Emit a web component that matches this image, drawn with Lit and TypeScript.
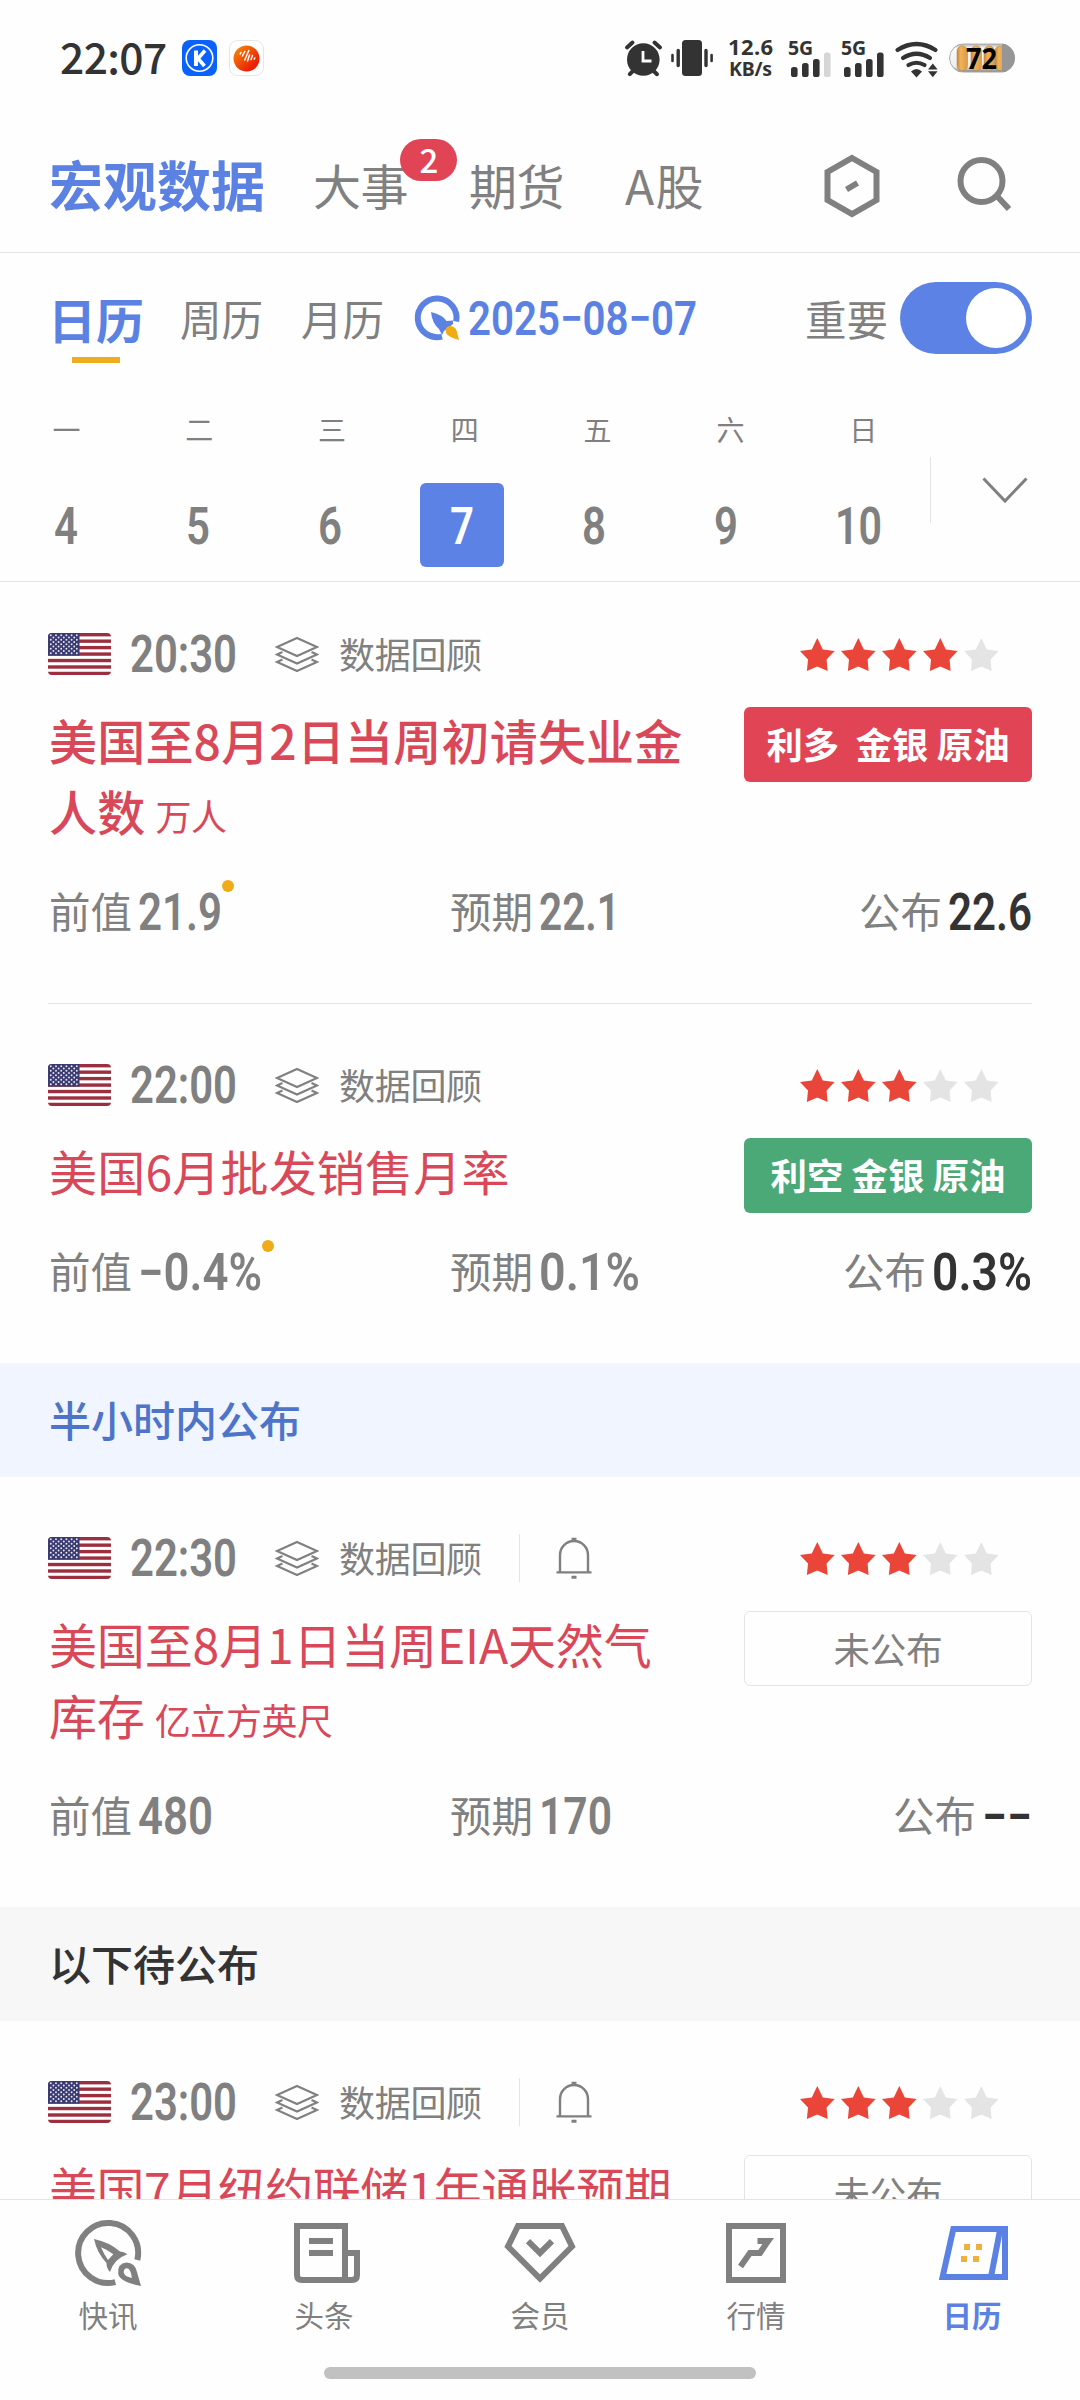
import { LitElement, html, css, svg, nothing } from "lit";
import { customElement, property } from "lit/decorators.js";

const FONT = css`"Noto Sans CJK SC", "Noto Sans", sans-serif`;

/** Narrow tabular figures: Roboto squeezed to a given ink width. */
@customElement("fig-text")
class FigText extends LitElement {
  @property() text = "";
  @property({ type: Number }) w = 100;
  @property({ type: Number }) size = 51;
  @property({ type: Number }) weight = 600;
  static styles = css`
    :host { display: inline-block; flex: none; }
    svg { display: block; overflow: visible; }
    text { font-family: Roboto, "Liberation Sans", sans-serif; fill: currentColor; }
  `;
  render() {
    const cap = Math.round(this.size * 0.711);
    return html`<svg width=${this.w} height=${cap}>
      <text x="-2" y=${cap} font-size=${this.size} font-weight=${this.weight}
        textLength=${this.w + 4} lengthAdjust="spacingAndGlyphs">${this.text}</text>
    </svg>`;
  }
}

const STAR = "17.3,0 22.8,11.6 34.6,13 26.6,21.4 27.6,33 17.3,28.6 6.9,33 8,21.4 0,13 11.8,11.6";

const flag = () => html`<svg class="flag" width="63" height="42" viewBox="0 0 63 42">
  <rect width="63" height="42" fill="#fff"/>
  ${[0, 1, 2, 3, 4, 5, 6].map((i) => svg`<rect y=${i * 6.46} width="63" height="3.4" fill="#9c2f3f"/>`)}
  <rect width="31.5" height="22.6" fill="#3b3b72"/>
  ${[0, 1, 2, 3, 4, 5, 6, 7, 8].map((r) =>
    Array.from({ length: r % 2 ? 5 : 6 }, (_, c) =>
      svg`<circle cx=${2.8 + c * 5.2 + (r % 2 ? 2.6 : 0)} cy=${2.3 + r * 2.25} r=".95" fill="#e6e6f2"/>`))}
</svg>`;

const layers = () => html`<svg width="44" height="36" viewBox="0 0 44 36" fill="none" stroke="#808080" stroke-width="2.2">
  <path d="M22 2 42 11 22 20 2 11Z"/>
  <path d="M7.5 16 2 18.5 22 27.5 42 18.5 36.5 16"/>
  <path d="M7.5 23.5 2 26 22 35 42 26 36.5 23.5"/>
</svg>`;

const bell = () => html`<svg width="36" height="42" viewBox="0 0 36 42" fill="none" stroke="#808080" stroke-width="2.4">
  <path d="M4 35V18a14 14 0 0 1 28 0V35M.5 35.4h35"/>
  <path d="M15.5 2.2h5M15.5 40.2h5" stroke-width="3"/>
</svg>`;

type Figure = [text: string, width: number];

interface Entry {
  time: string; stars: number; title: string; unit?: string; style?: string; bell?: boolean;
  tag: string; kind: string; revised?: boolean;
  values?: { prev: Figure; est: Figure; act: Figure };
}

@customElement("data-card")
class DataCard extends LitElement {
  @property({ attribute: false }) entry!: Entry;
  static styles = css`
    :host { display: block; padding: 60px 48px 0; color: #808080; }
    :host([first]) { padding-top: 51px; }
    .head { display: flex; align-items: center; height: 42px; }
    .flag { border-radius: 4px; display: block; }
    .head fig-text { margin-left: 21px; }
    .layers { display: flex; margin-left: 40px; }
    .review { font-size: 36px; line-height: 42px; margin: -3px 0 0 20px; letter-spacing: -.3px; }
    .rule { width: 1px; height: 48px; background: #e4e4e4; margin-left: 37px; }
    .bell { display: flex; margin-left: 36px; }
    .stars { display: flex; margin-left: auto; margin-right: 33px; }
    .body { display: flex; justify-content: space-between; align-items: flex-start; margin-top: 32px; }
    .title { width: 645px; margin: -3px 0 3px 1px; font-size: 48px; letter-spacing: .2px; line-height: 71px; color: #d94858; white-space: pre-line; }
    .strong { font-weight: 500; }
    .tight { letter-spacing: -.15px; }
    .tighter { letter-spacing: -.5px; }
    .unit { font-size: 36px; line-height: 36px; font-weight: 400; margin-left: 10px; letter-spacing: -.4px; }
    .tag { box-sizing: border-box; width: 288px; height: 75px; border-radius: 6px; font-size: 36.4px; line-height: 73px;
      margin-bottom: -4px; text-align: center; color: #fff; font-weight: 700; white-space: pre; }
    .up { background: #e04455; }
    .down { background: #4ba977; }
    .wait { border: 1px solid #e4e4e4; color: #808080; font-weight: 400; line-height: 72px; }
    .values { display: grid; grid-template-columns: 401px 1fr auto; height: 60px; align-items: center; margin-top: 33px;
      font-size: 41.5px; line-height: 60px; padding-bottom: 61px; }
    .value { display: flex; align-items: center; }
    .label { margin: -5px 0 0 1px; }
    .value fig-text { margin-left: 8px; }
    .act fig-text { color: #333; margin-right: 2px; }
    .dot { width: 12px; height: 12px; border-radius: 50%; background: #f0ac16; align-self: flex-start; margin: -5px 0 0 2px; }
  `;
  private value(label: string, fig: Figure, cls = "", dot = false) {
    return html`<div class="value ${cls}"><span class="label">${label}</span><fig-text .text=${fig[0]} .w=${fig[1]}></fig-text>${dot ? html`<span class="dot"></span>` : nothing}</div>`;
  }
  render() {
    const e = this.entry;
    return html`
      <div class="head">
        ${flag()}
        <fig-text .text=${e.time} .w=${103} .weight=${600}></fig-text>
        <span class="layers">${layers()}</span>
        <span class="review">数据回顾</span>
        ${e.bell ? html`<span class="rule"></span><span class="bell">${bell()}</span>` : nothing}
        <svg class="stars" width="199" height="33">
          ${[0, 1, 2, 3, 4].map((i) => svg`<polygon points=${STAR} transform="translate(${i * 41} 0)" fill=${i < e.stars ? "#e94538" : "#e4e4e4"}/>`)}
        </svg>
      </div>
      <div class="body">
        <div class="title ${e.style ?? ""}">${e.title}${e.unit ? html`<span class="unit">${e.unit}</span>` : nothing}</div>
        <div class="tag ${e.kind}">${e.tag}</div>
      </div>
      ${e.values ? html`<div class="values">
        ${this.value("前值", e.values.prev, "", e.revised)}
        ${this.value("预期", e.values.est)}
        ${this.value("公布", e.values.act, "act")}
      </div>` : nothing}`;
  }
}

const ENTRIES: Entry[] = [
  { time: "20:30", stars: 4, title: "美国至8月2日当周初请失业金\n人数", unit: "万人", style: "strong", tag: "利多  金银 原油", kind: "up", revised: true,
    values: { prev: ["21.9", 80], est: ["22.1", 77], act: ["22.6", 80] } },
  { time: "22:00", stars: 3, title: "美国6月批发销售月率", tag: "利空 金银 原油", kind: "down", revised: true,
    values: { prev: ["−0.4%", 120], est: ["0.1%", 97], act: ["0.3%", 96] } },
  { time: "22:30", stars: 3, title: "美国至8月1日当周EIA天然气\n库存", unit: "亿立方英尺", style: "tight", bell: true, tag: "未公布", kind: "wait",
    values: { prev: ["480", 71], est: ["170", 69], act: ["−−", 46] } },
  { time: "23:00", stars: 3, title: "美国7月纽约联储1年通胀预期", style: "tighter", bell: true, tag: "未公布", kind: "wait" },
];

const G = "#333";

const statusIcons = () => html`
<svg width="392" height="42" viewBox="624 37 392 42">
  <g fill=${G} stroke=${G}>
    <circle cx="643.3" cy="59.5" r="16.3" stroke="none"/>
    <path d="M627 47.5 632.5 42.5M660 47.5 654.5 42.5" stroke-width="4" stroke-linecap="round"/>
    <path d="M634 70 629.8 74.2M652.5 70 657 74.2" stroke-width="4" stroke-linecap="round"/>
    <path d="M643 51V61H651.5" fill="none" stroke="#fefefe" stroke-width="2.8"/>
    <rect x="682" y="40" width="20" height="36" rx="3.5" stroke="none"/>
    <path d="M678.2 50.5V65.5M706 50.5V65.5" stroke-width="3.4" stroke-linecap="round"/>
    <path d="M672.5 55V61M711.6 55V61" stroke-width="2.6" stroke-linecap="round"/>
  </g>
  <g fill=${G} class="st">
    <text x="728" y="55" font-size="22" textLength="45">12.6</text>
    <text x="729" y="75.5" font-size="19.5" textLength="43">KB/s</text>
    <text x="788" y="55" font-size="19.5" textLength="25">5G</text>
    <text x="841" y="55" font-size="19.5" textLength="25">5G</text>
  </g>
  ${[0, 53].map((dx) => [[791, 67], [802, 63], [813, 59], [824, 52.5]].map(([x, y], i) =>
    svg`<rect x=${x + dx} y=${y} width="6.6" height=${77 - y} rx="2.6" fill=${i === 3 && !dx ? "#d6d6d6" : G}/>`))}
  <g fill="none" stroke=${G} stroke-width="4.2" stroke-linecap="round">
    <path d="M897.5 50Q916.5 38 935.5 50"/>
    <path d="M903 58Q916.5 49.5 930 58"/>
    <path d="M908.5 65Q916.5 60.5 924.5 65"/>
  </g>
  <path d="M911 71.5Q916.5 66.5 922 71.5L916.5 77.5Z" fill=${G}/>
  <path d="M928 69.5 932.8 63.5 937.6 69.5ZM928 71.2H937.6L932.8 77.2Z" fill=${G}/>
  <defs>
    <clipPath id="bat"><rect x="949" y="43.5" width="66" height="29" rx="14.5"/></clipPath>
    <linearGradient id="cell"><stop offset="0" stop-color="#c98539"/><stop offset=".35" stop-color="#f0b25a"/><stop offset="1" stop-color="#dd9a45"/></linearGradient>
    <linearGradient id="tube" x2="0" y2="1"><stop offset="0" stop-color="#aaa"/><stop offset=".16" stop-color="#fafafa"/><stop offset=".8" stop-color="#eee"/><stop offset="1" stop-color="#777"/></linearGradient>
  </defs>
  <g clip-path="url(#bat)">
    <rect x="949" y="43.5" width="66" height="29" fill="url(#tube)"/>
    <rect x="949.5" y="44" width="65" height="28" rx="14" fill="none" stroke="#aaa"/>
    ${[957, 971, 984, 995].map((x) => svg`<rect x=${x} y="46" width="10.5" height="24.5" rx="5" fill="url(#cell)" stroke="#b98a52" stroke-width=".6"/>`)}
    <rect x="1002" y="43" width="14" height="30" fill="#969696"/>
  </g>
  <text x="966" y="68.5" font-size="29" textLength="31" lengthAdjust="spacingAndGlyphs" class="bt">72</text>
</svg>`;

const navIcons: Record<string, unknown> = {
  快讯: svg`<path d="M62.3 40A30 30 0 1 0 40.3 62.1" fill="none" stroke="#808080" stroke-width="6"/>
    <path fill="#808080" fill-rule="evenodd" d="M19 19Q34 22 45 31.5Q49 31.5 52.3 34.3Q39 39 35 52Q31.5 48.5 31.5 43Q22 33 19 19ZM26 27.3Q29 34.5 33 40L38.3 34.3Q33 30 26 27.3Z"/>
    <path fill="#808080" fill-rule="evenodd" d="M66 66Q45 62 43.2 54Q42 43.5 51.5 42.6Q60 43 62 52ZM56.8 58Q56 49 52 48.3Q48.5 48.5 48.7 52.5Q49.5 56.5 56.8 58Z"/>`,
  头条: svg`<g fill="none" stroke="#808080" stroke-width="6" transform="translate(3 3)">
    <path d="M3 3H51V57H8Q3 57 3 52Z"/><path d="M51 30H63V52Q63 57 58 57H50"/>
    <path d="M15 18H39M15 30H39"/></g>`,
  会员: svg`<g fill="none" stroke="#808080" stroke-width="6" transform="translate(-3 3)">
    <path d="M14 3H58L68 23.5 36 55.5 4 23.5Z"/><path d="M24 18.2 36 30 48 18.2"/></g>`,
  行情: svg`<g fill="none" stroke="#808080" stroke-width="6" transform="translate(3 3)">
    <path d="M3 3H57V57H3Z"/><path d="M14.5 43.5 24 30H34L42 18H31.5"/><path d="M38 15H48L40 25Z" fill="#808080" stroke="none"/></g>`,
  日历: svg`<g fill="none" stroke="#5b82e2" stroke-width="6" transform="translate(0 6)">
    <path d="M14.3 3H66V51H3.6Z"/><path d="M61.2 3 52 51"/></g>
    <path fill="#efb040" d="M25 24h6v6h-6zM37 24h6v6h-6zM22 36h6v6h-6zM34 36h6v6h-6z"/>`,
};

@customElement("app-root")
class AppRoot extends LitElement {
  static styles = css`
    :host { display: flex; flex-direction: column; width: 1080px; height: 2400px; overflow: hidden; background: #fefefe;
      color: #808080; font-family: ${FONT}; }
    * { box-sizing: border-box; }
    svg { display: block; flex: none; overflow: visible; }
    .status { display: flex; align-items: center; height: 116px; padding: 0 64px 0 60px; flex: none; }
    .clock { font-size: 42.5px; font-weight: 500; color: #333; line-height: 60px; width: 122px; margin-top: -5px; letter-spacing: -.6px; }
    .k { margin-right: 12px; }
    .sicons { margin-left: auto; }
    .st { font-family: "Noto Sans", sans-serif; font-weight: 700; }
    .bt { font-family: "Noto Sans", sans-serif; font-weight: 700; fill: #000; }
    .tabs { display: flex; align-items: center; height: 137px; border-bottom: 1px solid #e4e4e4; padding: 4px 68px 0 49px; flex: none; font-size: 48px; line-height: 70px; }
    .tabs b { font-size: 54px; font-weight: 700; color: #5b82e2; width: 264px; }
    .tabs b, .tabs span { margin-top: -4px; }
    .event { position: relative; width: 156px; letter-spacing: -.6px; }
    .tabs .count { position: absolute; left: 87px; top: -10px; margin: 0; width: 57px; height: 42px; border-radius: 21px; background: #e04455; color: #fff;
      font-size: 33px; font-weight: 500; line-height: 40px; text-align: center; }
    .futures { width: 156px; letter-spacing: -.6px; }
    .stocks { letter-spacing: 1.4px; }
    .hex { margin-left: auto; margin-right: 77px; }
    .filter { display: flex; align-items: center; height: 132px; padding: 0 48px 2px; flex: none; font-size: 41.5px; line-height: 60px; }
    .sel { font-size: 48px; font-weight: 700; color: #5b82e2; width: 132px; margin: 15px 0 0; display: flex; flex-direction: column; }
    .sel::after { content: ""; width: 48px; height: 6px; background: #edad1e; margin: 9px 0 0 24px; }
    .week { width: 121px; }
    .month { width: 114px; }
    .date { color: #5b82e2; margin: 0 0 0 10px; }
    .imp { margin-left: auto; }
    .toggle { width: 132px; height: 72px; border-radius: 36px; background: #5b82e4; padding: 6px; margin-left: 12px; display: flex; justify-content: flex-end; }
    .toggle i { width: 60px; height: 60px; border-radius: 50%; background: #fff; }
    .cal { display: flex; height: 197px; border-bottom: 1px solid #e4e4e4; align-items: flex-start; flex: none; }
    .wd { display: grid; grid-template-columns: repeat(7, 132.8px); font-size: 28px; line-height: 40px; padding-top: 24px; height: 98px; text-align: center; }
    .days { display: grid; grid-template-columns: repeat(7, 132px); }
    .day { display: flex; justify-content: center; }
    .cell { width: 84px; height: 84px; display: flex; align-items: center; justify-content: center; border-radius: 6px; padding-top: 2px; }
    .on { background: #5b82e4; color: #fff; }
    .more { display: flex; align-items: center; border-left: 1px solid #e4e4e4; height: 66px; margin-top: 72px; padding: 0 0 0 51px; }
    .list { flex: 1; min-height: 0; overflow: hidden; }
    .line { height: 1px; background: #e4e4e4; margin: 0 48px; }
    .band { height: 114px; line-height: 111px; padding-left: 49px; font-size: 42px; font-weight: 500; background: #f7f7f7; color: #333; }
    .soon { background: #f0f5ff; color: #4e74c8; }
    .nav { display: grid; grid-template-columns: repeat(5, 216px); height: 201px; border-top: 1px solid #e4e4e4; background: #fefefe; flex: none; align-content: start; padding-top: 20px; }
    .item { display: flex; flex-direction: column; align-items: center; font-size: 29.5px; line-height: 40px; gap: 8px; }
    .item.act { color: #5b82e2; font-weight: 700; }
    .home { grid-column: 1 / -1; width: 432px; height: 12px; border-radius: 6px; background: #c1c1c1; margin: 33px auto 0; }
  `;
  render() {
    return html`
      <div class="status">
        <span class="clock">22:07</span>
        <svg class="k" width="35" height="36" viewBox="0 0 35 36">
          <rect width="35" height="36" rx="8" fill="#0a62fb"/>
          <circle cx="17.5" cy="18" r="13.3" fill="none" stroke="#fff" stroke-width="1.6"/>
          <path d="M14 10.5V26" stroke="#fff" stroke-width="4"/><path d="M23 10.5 16 18.5 22.5 26" fill="none" stroke="#fff" stroke-width="3.6"/>
        </svg>
        <svg width="35" height="36" viewBox="0 0 35 36">
          <defs><linearGradient id="o" x2="1" y2="1"><stop offset=".1" stop-color="#f5820a"/><stop offset=".8" stop-color="#ec1c04"/></linearGradient></defs>
          <rect x=".5" y=".5" width="34" height="35" rx="8" fill="#fff" stroke="#e6e6e6"/>
          <circle cx="17.5" cy="18.5" r="13" fill="url(#o)"/>
          <path d="M12 12.5l-.8 1.5M15.8 11.5l-2.4 4.5M19.8 10.5l-4 9.5M20.5 15l-2 6M23.5 15.5l-1.5 4M25.8 18l-.6 1.2" stroke="#fff" stroke-width="1.5" stroke-linecap="round"/>
        </svg>
        <span class="sicons">${statusIcons()}</span>
      </div>
      <div class="tabs">
        <b>宏观数据</b>
        <span class="event">大事<span class="count">2</span></span>
        <span class="futures">期货</span>
        <span class="stocks">A股</span>
        <svg class="hex" width="56" height="64" viewBox="0 0 56 64" fill="none" stroke="#808080" stroke-width="6">
          <path d="M28 4 52.5 18V46L28 60 3.5 46V18Z"/><path d="M22.5 35.5 33.5 29"/>
        </svg>
        <svg width="55" height="60" viewBox="0 0 55 60" fill="none" stroke="#808080" stroke-width="6">
          <circle cx="24.5" cy="25" r="21"/><path d="M39.5 39.5 52 53"/>
        </svg>
      </div>
      <div class="filter">
        <span class="sel">日历</span>
        <span class="week">周历</span>
        <span class="month">月历</span>
        <svg width="45" height="46" viewBox="0 0 45 46">
          <path d="M27 41.6A19.4 19.4 0 1 1 41.2 26.5" fill="none" stroke="#5b82e2" stroke-width="6"/>
          <path d="M16 17Q28 20 31.5 26L38 25.5V29L29 36 27 40 24 34Q17 28 16 17Z" fill="#5b82e2"/>
          <path d="M44 45Q33 42 31 38Q29 31 36 31Q41 32 42 37Z" fill="#f0ac16"/>
        </svg>
        <fig-text class="date" text="2025−08−07" .w=${225} .size=${48} .weight=${600}></fig-text>
        <span class="imp">重要</span>
        <span class="toggle"><i></i></span>
      </div>
      <div class="cal">
        <div>
          <div class="wd">${[..."一二三四五六日"].map((d) => html`<span>${d}</span>`)}</div>
          <div class="days">${[4, 5, 6, 7, 8, 9, 10].map((d) => html`<span class="day"><span class="cell ${d === 7 ? "on" : ""}">
            <fig-text .text=${String(d)} .w=${d === 10 ? 43 : 20} .weight=${600}></fig-text></span></span>`)}</div>
        </div>
        <div class="more"><svg width="46" height="28" viewBox="0 0 46 28" fill="none" stroke="#808080" stroke-width="3"><path d="M1.5 2.5 23 25 44.5 2.5"/></svg></div>
      </div>
      <div class="list">
        <data-card first .entry=${ENTRIES[0]}></data-card>
        <div class="line"></div>
        <data-card .entry=${ENTRIES[1]}></data-card>
        <div class="band soon">半小时内公布</div>
        <data-card .entry=${ENTRIES[2]}></data-card>
        <div class="band">以下待公布</div>
        <data-card .entry=${ENTRIES[3]}></data-card>
      </div>
      <div class="nav">
        ${Object.keys(navIcons).map((k) => html`<div class="item ${k === "日历" ? "act" : ""}">
          <svg width="66" height="66" viewBox="0 0 66 66">${navIcons[k]}</svg><span>${k}</span></div>`)}
        <div class="home"></div>
      </div>`;
  }
}
